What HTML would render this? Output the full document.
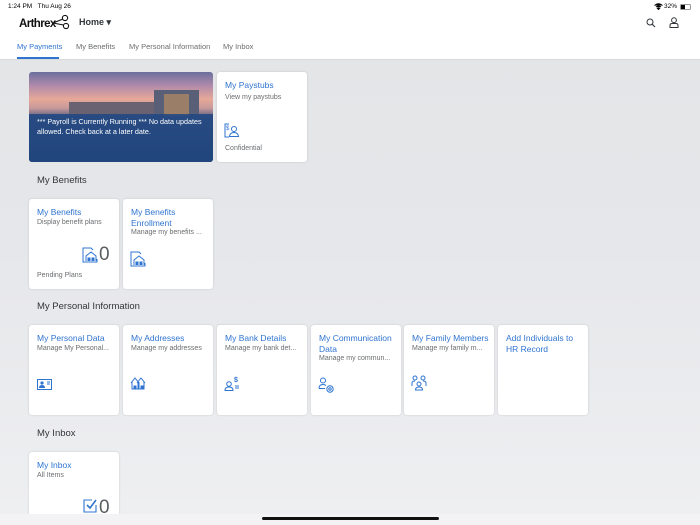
<!DOCTYPE html>
<html><head><meta charset="utf-8"><style>
*{margin:0;padding:0;box-sizing:border-box}
body{width:700px;height:525px;overflow:hidden;font-family:"Liberation Sans",sans-serif;position:relative;background:linear-gradient(#e3e5e7 60px,#e6e7ea 250px,#eeeff1 510px);}
.abs{position:absolute}
.hdr{left:0;top:0;width:700px;height:60px;background:#fff;border-bottom:1px solid #d9dadc}
.tile{position:absolute;width:90px;height:90px;background:#fff;border-radius:3px;box-shadow:0 0 2px rgba(0,0,0,.15)}
.t{position:absolute;left:8px;top:8px;right:2px;color:#2f74d0;font-size:8.5px;line-height:10.5px}
.s{position:absolute;left:8px;color:#6a6d70;font-size:7px;white-space:nowrap}
.sec{position:absolute;left:37px;font-size:9.5px;color:#32363a}
.tab{position:absolute;top:42px;font-size:7.5px;color:#6a6d70}
svg{position:absolute}
</style></head><body>
<div class="abs hdr"></div>
<div class="abs" style="left:8px;top:3px;font-size:6.5px;color:#000">1:24 PM&nbsp;&nbsp;&nbsp;Thu Aug 26</div>
<div class="abs" style="left:664px;top:3px;font-size:6.5px;color:#000">32%</div>
<svg style="left:654px;top:3px" width="9" height="7" viewBox="0 0 9 7"><path d="M0.5 2.5Q4.5-1 8.5 2.5M2 4Q4.5 2 7 4M4.5 6.5L3.3 5.2Q4.5 4.4 5.7 5.2Z" stroke="#000" stroke-width="1" fill="#000"/></svg>
<div class="abs" style="left:680px;top:3.5px;width:11px;height:6px;border:0.7px solid #999;border-radius:1.5px"><div style="width:3.5px;height:100%;background:#000"></div></div>
<div class="abs" style="left:19px;top:18px;font-size:11.5px;font-weight:bold;color:#111;letter-spacing:-0.6px">Arthrex</div>
<svg style="left:52px;top:14px" width="18" height="16" viewBox="0 0 18 16"><circle cx="13" cy="4" r="2.6" fill="none" stroke="#111" stroke-width="1.1"/><circle cx="14" cy="12" r="2.6" fill="none" stroke="#111" stroke-width="1.1"/><path d="M1 9L11 5M1 9L11.5 11" stroke="#111" stroke-width="1.1"/></svg>
<div class="abs" style="left:79px;top:17px;font-size:9px;font-weight:bold;color:#32363a">Home ▾</div>
<svg style="left:646px;top:18px" width="10" height="10" viewBox="0 0 10 10"><circle cx="4" cy="4" r="3" fill="none" stroke="#32363a" stroke-width="1"/><path d="M6.2 6.2L9 9" stroke="#32363a" stroke-width="1.1"/></svg>
<svg style="left:669px;top:17px" width="10" height="11" viewBox="0 0 10 11"><circle cx="5" cy="3.2" r="2.4" fill="none" stroke="#32363a" stroke-width="1"/><path d="M1 10.5V8.5Q1 6.5 3 6.5H7Q9 6.5 9 8.5V10.5Z" fill="none" stroke="#32363a" stroke-width="1"/></svg>
<div class="tab" style="left:17px;color:#2f74d0">My Payments</div>
<div class="abs" style="left:17px;top:57px;width:42px;height:2px;background:#2f74d0"></div>
<div class="tab" style="left:76px">My Benefits</div>
<div class="tab" style="left:129px">My Personal Information</div>
<div class="tab" style="left:223px">My Inbox</div>

<div class="abs" style="left:29px;top:72px;width:184px;height:90px;border-radius:3px;overflow:hidden;background:linear-gradient(180deg,#6a6f9e 0%,#b08aaa 15%,#e6a898 30%,#c89a9a 40%,#5a5f7e 50%,#2a3d5c 100%)">
 <div class="abs" style="left:40px;top:30px;width:120px;height:14px;background:#6a6270"></div>
 <div class="abs" style="left:125px;top:18px;width:45px;height:26px;background:#5a5f78"></div>
 <div class="abs" style="left:135px;top:22px;width:25px;height:22px;background:#9a7e68"></div>
 <div class="abs" style="left:0;top:42px;width:184px;height:48px;background:rgba(30,70,130,.85)"></div>
 <div class="abs" style="left:8px;top:45px;width:176px;font-size:7.2px;line-height:10px;color:#fff">*** Payroll is Currently Running *** No data updates allowed. Check back at a later date.</div>
</div>
<div class="tile" style="left:217px;top:72px"><div class="t">My Paystubs</div><div class="s" style="top:22px">View my paystubs</div>
<svg style="left:7px;top:51px" width="16" height="15" viewBox="0 0 16 15"><path d="M5 1H1V14H5" fill="none" stroke="#2f74d0" stroke-width="1"/><text x="2" y="7" font-size="6" fill="#2f74d0" font-family="Liberation Sans">$</text><circle cx="10" cy="6" r="2.5" fill="none" stroke="#2f74d0"/><path d="M5.5 13.5Q6 9.5 10 9.5Q14 9.5 14.5 13.5Z" fill="none" stroke="#2f74d0"/></svg>
<div class="s" style="top:73px">Confidential</div></div>

<div class="sec" style="top:175px">My Benefits</div>
<div class="tile" style="left:29px;top:199px"><div class="t">My Benefits</div><div class="s" style="top:20px">Display benefit plans</div>
<svg style="left:53px;top:48px" width="16" height="16" viewBox="0 0 16 16"><path d="M5 1H1V15H15V12M5 1H9L11 3" fill="none" stroke="#2f74d0" stroke-width="1"/><path d="M4 14V9L9 5L14 9V14" fill="none" stroke="#2f74d0"/><path d="M6 14V11H8V14M10 14V11H12V14" stroke="#2f74d0" fill="#2f74d0"/></svg>
<div class="abs" style="left:70px;top:45px;font-size:19px;color:#5a5e62">0</div>
<div class="s" style="top:73px">Pending Plans</div></div>
<div class="tile" style="left:123px;top:199px"><div class="t">My Benefits<br>Enrollment</div><div class="s" style="top:30px">Manage my benefits ...</div>
<svg style="left:7px;top:52px" width="16" height="16" viewBox="0 0 16 16"><path d="M5 1H1V15H15V12M5 1H9L11 3" fill="none" stroke="#2f74d0" stroke-width="1"/><path d="M4 14V9L9 5L14 9V14" fill="none" stroke="#2f74d0"/><path d="M6 14V11H8V14M10 14V11H12V14" stroke="#2f74d0" fill="#2f74d0"/></svg></div>

<div class="sec" style="top:301px">My Personal Information</div>
<div class="tile" style="left:29px;top:325px"><div class="t">My Personal Data</div><div class="s" style="top:20px">Manage My Personal...</div>
<svg style="left:8px;top:54px" width="15" height="11" viewBox="0 0 15 11"><rect x="0.5" y="0.5" width="14" height="10" fill="none" stroke="#2f74d0"/><circle cx="5" cy="4" r="1.6" fill="#2f74d0"/><path d="M2 9Q2 6 5 6Q8 6 8 9Z" fill="#2f74d0"/><path d="M10 3H13M10 5H13" stroke="#2f74d0"/></svg></div>
<div class="tile" style="left:123px;top:325px"><div class="t">My Addresses</div><div class="s" style="top:20px">Manage my addresses</div>
<svg style="left:7px;top:52px" width="16" height="13" viewBox="0 0 16 13"><path d="M1 6L5 1L9 6M7 6L11 1L15 6M2 5V12H8V5M9 5V12H14V5" fill="none" stroke="#2f74d0"/><path d="M4 12V9H6V12M11 12V9H13V12" fill="#2f74d0" stroke="#2f74d0"/></svg></div>
<div class="tile" style="left:217px;top:325px"><div class="t">My Bank Details</div><div class="s" style="top:20px">Manage my bank det...</div>
<svg style="left:7px;top:50px" width="16" height="16" viewBox="0 0 16 16"><circle cx="5" cy="9" r="2.3" fill="none" stroke="#2f74d0"/><path d="M1 15.5Q1 12 5 12Q9 12 9 15.5Z" fill="none" stroke="#2f74d0"/><text x="10" y="7" font-size="7" font-weight="bold" fill="#2f74d0" font-family="Liberation Sans">$</text><path d="M11 11H15M11 13H15" stroke="#2f74d0"/></svg></div>
<div class="tile" style="left:311px;top:325px"><div class="t">My Communication<br>Data</div><div class="s" style="top:30px">Manage my commun...</div>
<svg style="left:7px;top:52px" width="16" height="16" viewBox="0 0 16 16"><circle cx="5" cy="3.5" r="2.5" fill="none" stroke="#2f74d0"/><path d="M1 11.5Q1 7.5 5 7.5Q7 7.5 8 8.5M1 11.5H7" fill="none" stroke="#2f74d0"/><circle cx="12" cy="12" r="3.2" fill="none" stroke="#2f74d0"/><circle cx="12" cy="12" r="1.2" fill="none" stroke="#2f74d0"/></svg></div>
<div class="tile" style="left:404px;top:325px"><div class="t" style="white-space:nowrap">My Family Members</div><div class="s" style="top:20px">Manage my family m...</div>
<svg style="left:7px;top:50px" width="16" height="16" viewBox="0 0 16 16"><circle cx="4" cy="3" r="2" fill="none" stroke="#2f74d0"/><circle cx="12" cy="3" r="2" fill="none" stroke="#2f74d0"/><circle cx="8" cy="9" r="2" fill="none" stroke="#2f74d0"/><path d="M1 11V8Q1 6 4 6M15 11V8Q15 6 12 6M4.5 15Q4.5 12 8 12Q11.5 12 11.5 15Z" fill="none" stroke="#2f74d0"/></svg></div>
<div class="tile" style="left:498px;top:325px"><div class="t">Add Individuals to<br>HR Record</div></div>

<div class="sec" style="top:428px">My Inbox</div>
<div class="tile" style="left:29px;top:452px;height:73px;border-radius:3px 3px 0 0"><div class="t">My Inbox</div><div class="s" style="top:20px">All Items</div>
<svg style="left:54px;top:47px" width="14" height="14" viewBox="0 0 14 14"><path d="M9 1H1V13H13V6" fill="none" stroke="#2f74d0" stroke-width="1.1"/><path d="M4 6L7 9L13 1" fill="none" stroke="#2f74d0" stroke-width="1.6"/></svg>
<div class="abs" style="left:70px;top:45px;font-size:19px;color:#5a5e62">0</div></div>
<div class="abs" style="left:0;top:514px;width:700px;height:11px;background:#f3f3f5"></div>
<div class="abs" style="left:262px;top:517px;width:177px;height:3px;border-radius:2px;background:#111"></div>
</body></html>
